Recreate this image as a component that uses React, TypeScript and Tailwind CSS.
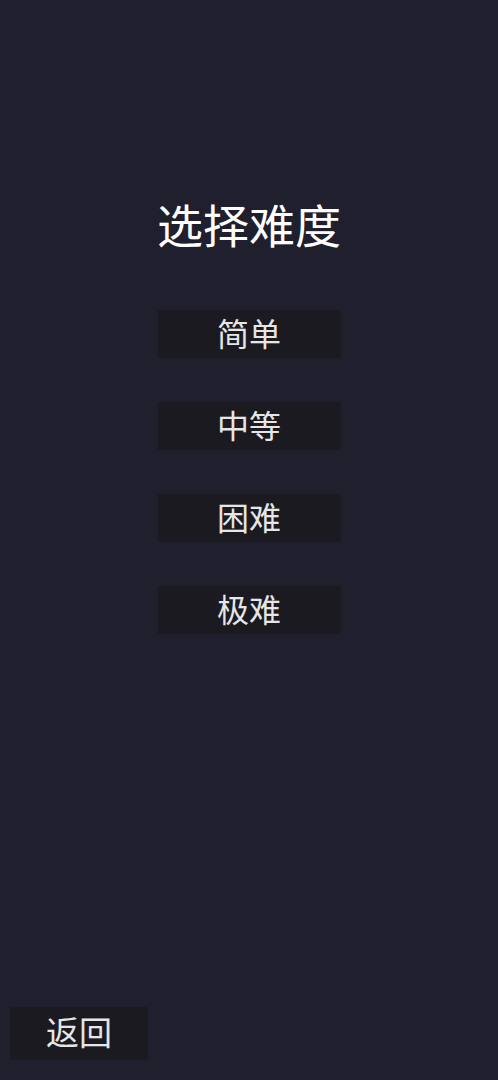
export default function App() {
  const levels = ['简单', '中等', '困难', '极难']

  return (
    <div
      className="flex h-[1080px] w-full flex-col bg-[#201f2e] text-white"
      style={{ fontFamily: '"Noto Sans CJK SC", "Noto Sans", sans-serif' }}
    >
      <h1 className="mt-[195px] text-center text-[46px] leading-[56px] font-normal text-white">
        选择难度
      </h1>

      <div className="mt-[59px] flex flex-col items-center gap-[44px]">
        {levels.map((l) => (
          <button
            key={l}
            type="button"
            className="flex h-[48px] w-[183px] items-center justify-center bg-[#1b1a21] pb-[4px] text-[32px] leading-none text-[#e6e6e6]"
          >
            {l}
          </button>
        ))}
      </div>

      <div className="mt-auto mb-[20px] ml-[10px]">
        <button
          type="button"
          className="flex h-[53px] w-[138px] items-center justify-center bg-[#1b1a21] pb-[4px] text-[33px] leading-none text-[#e6e6e6]"
        >
          返回
        </button>
      </div>
    </div>
  )
}
